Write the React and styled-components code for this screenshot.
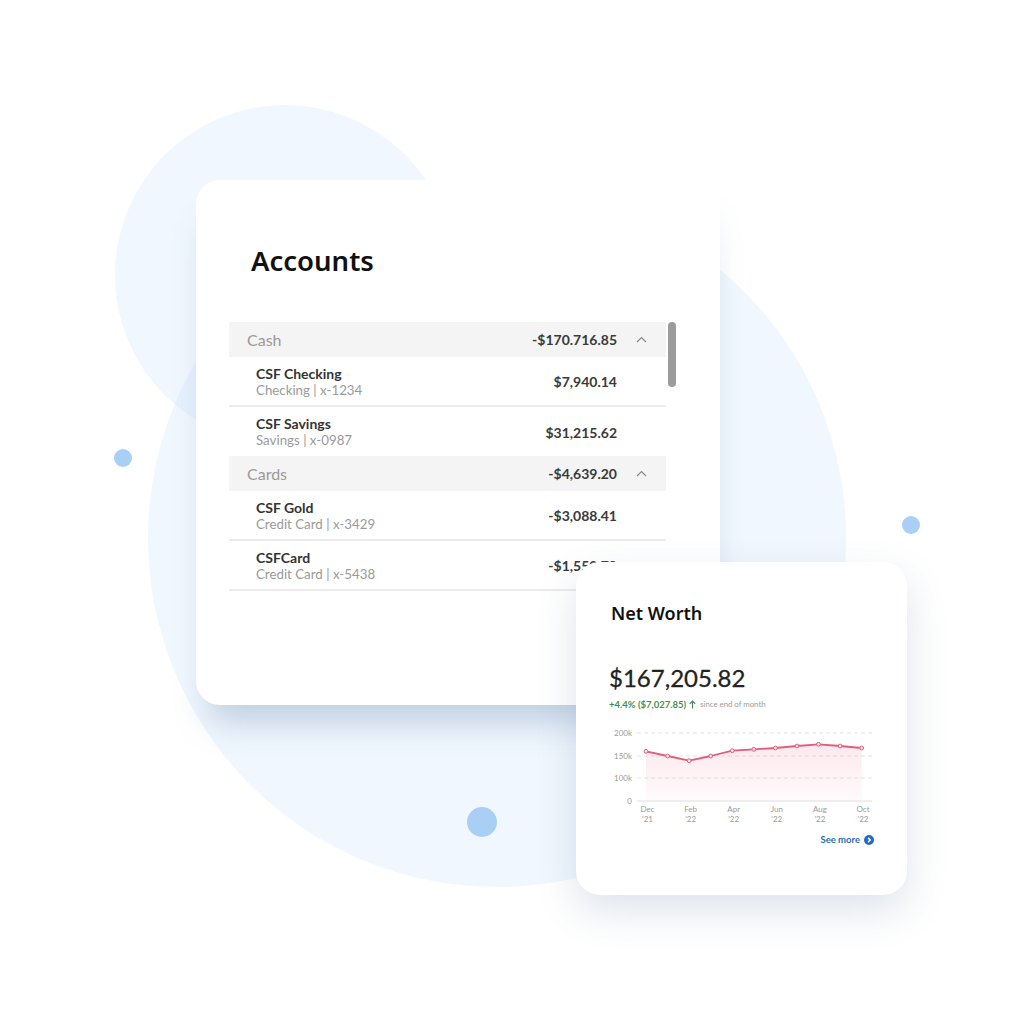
import React from 'react'
import styled, { createGlobalStyle } from 'styled-components'

const GlobalStyle = createGlobalStyle`
  html, body {
    margin: 0;
    padding: 0;
    background: #ffffff;
  }
  * {
    box-sizing: border-box;
  }
`

const Stage = styled.div`
  position: relative;
  width: 1024px;
  height: 1024px;
  overflow: hidden;
  background: #ffffff;
  font-family: 'Lato', 'Noto Sans', sans-serif;
`

const Blob = styled.div`
  position: absolute;
  left: ${p => p.$x - p.$r}px;
  top: ${p => p.$y - p.$r}px;
  width: ${p => p.$r * 2}px;
  height: ${p => p.$r * 2}px;
  border-radius: 50%;
  background: rgba(200, 226, 251, 0.28);
`

const Dot = styled.div`
  position: absolute;
  left: ${p => p.$x - p.$r}px;
  top: ${p => p.$y - p.$r}px;
  width: ${p => p.$r * 2}px;
  height: ${p => p.$r * 2}px;
  border-radius: 50%;
  background: #a9cff7;
`

const Card = styled.div`
  position: absolute;
  background: #ffffff;
  border-radius: 24px;
  display: flex;
  flex-direction: column;
`

const AccountsCard = styled(Card)`
  left: 196px;
  top: 180px;
  width: 524px;
  height: 525px;
  padding-left: 33px;
  box-shadow: 0 30px 34px -14px rgba(95, 125, 170, 0.35);
`

const NetWorthCard = styled(Card)`
  left: 576px;
  top: 562px;
  width: 331px;
  height: 333px;
  padding: 0 33px 0 35px;
  box-shadow: 0 16px 40px rgba(90, 115, 155, 0.2);
`

const Title = styled.h1`
  margin: 67px 0 0 22px;
  font-family: 'Noto Sans', sans-serif;
  font-weight: 600;
  font-size: 27.5px;
  line-height: 28px;
  color: #111111;
`

const ListArea = styled.div`
  display: flex;
  align-items: flex-start;
  gap: 2px;
  margin-top: 47px;
`

const List = styled.div`
  width: 437px;
  display: flex;
  flex-direction: column;
`

const Scrollbar = styled.div`
  width: 8px;
  height: 65px;
  border-radius: 4px;
  background: #9b9b9b;
`

const GroupHeader = styled.div`
  height: 35px;
  display: flex;
  align-items: center;
  padding-left: 18px;
  background: #f4f4f4;
`

const GroupName = styled.span`
  flex: 1;
  font-size: 16px;
  color: #9a9a9a;
`

const Amount = styled.span`
  font-size: 14px;
  font-weight: 700;
  color: #3a3a3a;
  white-space: nowrap;
`

const Toggle = styled.span`
  width: 49px;
  display: flex;
  justify-content: center;
  align-items: center;
`

const Row = styled.div`
  height: ${p => (p.$divider ? 50 : 49)}px;
  display: flex;
  align-items: center;
  padding: 1px 49px 0 27px;
  border-bottom: ${p => (p.$divider ? '2px solid #ebebeb' : 'none')};
`

const RowText = styled.div`
  flex: 1;
  display: flex;
  flex-direction: column;
`

const RowName = styled.span`
  font-size: 14px;
  line-height: 16px;
  font-weight: 700;
  color: #333333;
`

const RowSub = styled.span`
  font-size: 13.3px;
  line-height: 16px;
  color: #9a9a9a;
`

const NwTitle = styled.h2`
  margin: 42px 0 0;
  font-family: 'Noto Sans', sans-serif;
  font-weight: 600;
  font-size: 18px;
  line-height: 18px;
  color: #111111;
`

const Total = styled.div`
  margin-top: 44px;
  margin-left: -2px;
  font-size: 24px;
  line-height: 24px;
  color: #222222;
  -webkit-text-stroke: 0.3px #222222;
`

const Change = styled.div`
  margin-top: 8px;
  margin-left: -2px;
  display: flex;
  align-items: center;
  gap: 3px;
  height: 12px;
`

const ChangeValue = styled.span`
  font-size: 9.5px;
  font-weight: 700;
  color: #3f8f50;
`

const ChangeNote = styled.span`
  font-size: 7.8px;
  color: #9a9a9a;
  margin-left: 1px;
`

const Chart = styled.svg`
  display: block;
  margin-top: 15px;
  overflow: visible;
  font-family: 'Lato', sans-serif;
`

const SeeMore = styled.a`
  margin-top: 9px;
  align-self: flex-end;
  display: flex;
  align-items: center;
  gap: 4px;
  font-size: 9.5px;
  font-weight: 700;
  color: #2b6cb4;
  text-decoration: none;
`

const groups = [
  {
    name: 'Cash',
    total: '-$170.716.85',
    rows: [
      { name: 'CSF Checking', sub: 'Checking | x-1234', amount: '$7,940.14', divider: true },
      { name: 'CSF Savings', sub: 'Savings | x-0987', amount: '$31,215.62' },
    ],
  },
  {
    name: 'Cards',
    total: '-$4,639.20',
    rows: [
      { name: 'CSF Gold', sub: 'Credit Card | x-3429', amount: '-$3,088.41', divider: true },
      { name: 'CSFCard', sub: 'Credit Card | x-5438', amount: '-$1,550.79', divider: true },
    ],
  },
]

const points = [26.3, 31, 35.7, 31, 25.7, 24.3, 23, 21, 19.3, 21, 23].map((y, i) => [35 + i * 21.57, y])
const months = [['Dec', "'21"], ['Feb', "'22"], ['Apr', "'22"], ['Jun', "'22"], ['Aug', "'22"], ['Oct', "'22"]]
const grid = [['200k', 8], ['150k', 31], ['100k', 53]]

const ChevronUp = () => (
  <svg width="11" height="7" viewBox="0 0 11 7">
    <polyline points="1,6 5.5,1.5 10,6" fill="none" stroke="#8a8a8a" strokeWidth="1.2" />
  </svg>
)

const NetChart = () => {
  const line = points.map(p => p.join(',')).join(' ')
  const last = points[points.length - 1]
  const area = `M${points[0][0]},76 L${line.split(' ').join(' L')} L${last[0]},76 Z`
  return (
    <Chart width="263" height="100" viewBox="0 0 263 100">
      <defs>
        <linearGradient id="nwFill" x1="0" y1="0" x2="0" y2="1">
          <stop offset="0" stopColor="#ea6b8a" stopOpacity="0.15" />
          <stop offset="1" stopColor="#ea6b8a" stopOpacity="0.03" />
        </linearGradient>
      </defs>
      {grid.map(([label, y]) => (
        <g key={label}>
          <line x1="26" x2="261" y1={y} y2={y} stroke="#dcdcdc" strokeWidth="0.8" strokeDasharray="4 3" />
          <text x="21" y={y + 3} fontSize="8" fill="#9a9a9a" textAnchor="end">{label}</text>
        </g>
      ))}
      <path d={area} fill="url(#nwFill)" />
      <line x1="26" x2="261" y1="76" y2="76" stroke="#dedede" strokeWidth="1" />
      <text x="21" y="79" fontSize="8" fill="#9a9a9a" textAnchor="end">0</text>
      <polyline points={line} fill="none" stroke="#e05d7c" strokeWidth="1.8" strokeLinejoin="round" />
      {points.map(([x, y], i) => (
        <circle key={i} cx={x} cy={y} r="1.9" fill="#fbe3e9" stroke="#e05d7c" strokeWidth="1" />
      ))}
      {months.map(([m, yr], i) => (
        <text key={m} x={36.5 + i * 43.1} fontSize="8" fill="#9a9a9a" textAnchor="middle">
          <tspan x={36.5 + i * 43.1} y="87">{m}</tspan>
          <tspan x={36.5 + i * 43.1} y="97">{yr}</tspan>
        </text>
      ))}
    </Chart>
  )
}

const App = () => (
  <Stage>
    <GlobalStyle />
    <Blob $x={285} $y={275} $r={170} />
    <Blob $x={497} $y={538} $r={349} />
    <Dot $x={123} $y={458} $r={9} />
    <Dot $x={911} $y={525} $r={9} />
    <Dot $x={482} $y={822} $r={15} />

    <AccountsCard>
      <Title>Accounts</Title>
      <ListArea>
        <List>
          {groups.map(group => (
            <React.Fragment key={group.name}>
              <GroupHeader>
                <GroupName>{group.name}</GroupName>
                <Amount>{group.total}</Amount>
                <Toggle><ChevronUp /></Toggle>
              </GroupHeader>
              {group.rows.map(row => (
                <Row key={row.name} $divider={row.divider}>
                  <RowText>
                    <RowName>{row.name}</RowName>
                    <RowSub>{row.sub}</RowSub>
                  </RowText>
                  <Amount>{row.amount}</Amount>
                </Row>
              ))}
            </React.Fragment>
          ))}
        </List>
        <Scrollbar />
      </ListArea>
    </AccountsCard>

    <NetWorthCard>
      <NwTitle>Net Worth</NwTitle>
      <Total>$167,205.82</Total>
      <Change>
        <ChangeValue>+4.4% ($7,027.85)</ChangeValue>
        <svg width="7" height="9" viewBox="0 0 7 9">
          <path d="M3.5 8.5 V1.2 M0.8 3.8 L3.5 1.1 L6.2 3.8" fill="none" stroke="#3f8f50" strokeWidth="1.2" />
        </svg>
        <ChangeNote>since end of month</ChangeNote>
      </Change>
      <NetChart />
      <SeeMore href="#">
        See more
        <svg width="10" height="10" viewBox="0 0 10 10">
          <circle cx="5" cy="5" r="5" fill="#1f6cc1" />
          <path d="M4.1 2.9 L6.2 5 L4.1 7.1" fill="none" stroke="#ffffff" strokeWidth="1.5" />
        </svg>
      </SeeMore>
    </NetWorthCard>
  </Stage>
)

export default App
